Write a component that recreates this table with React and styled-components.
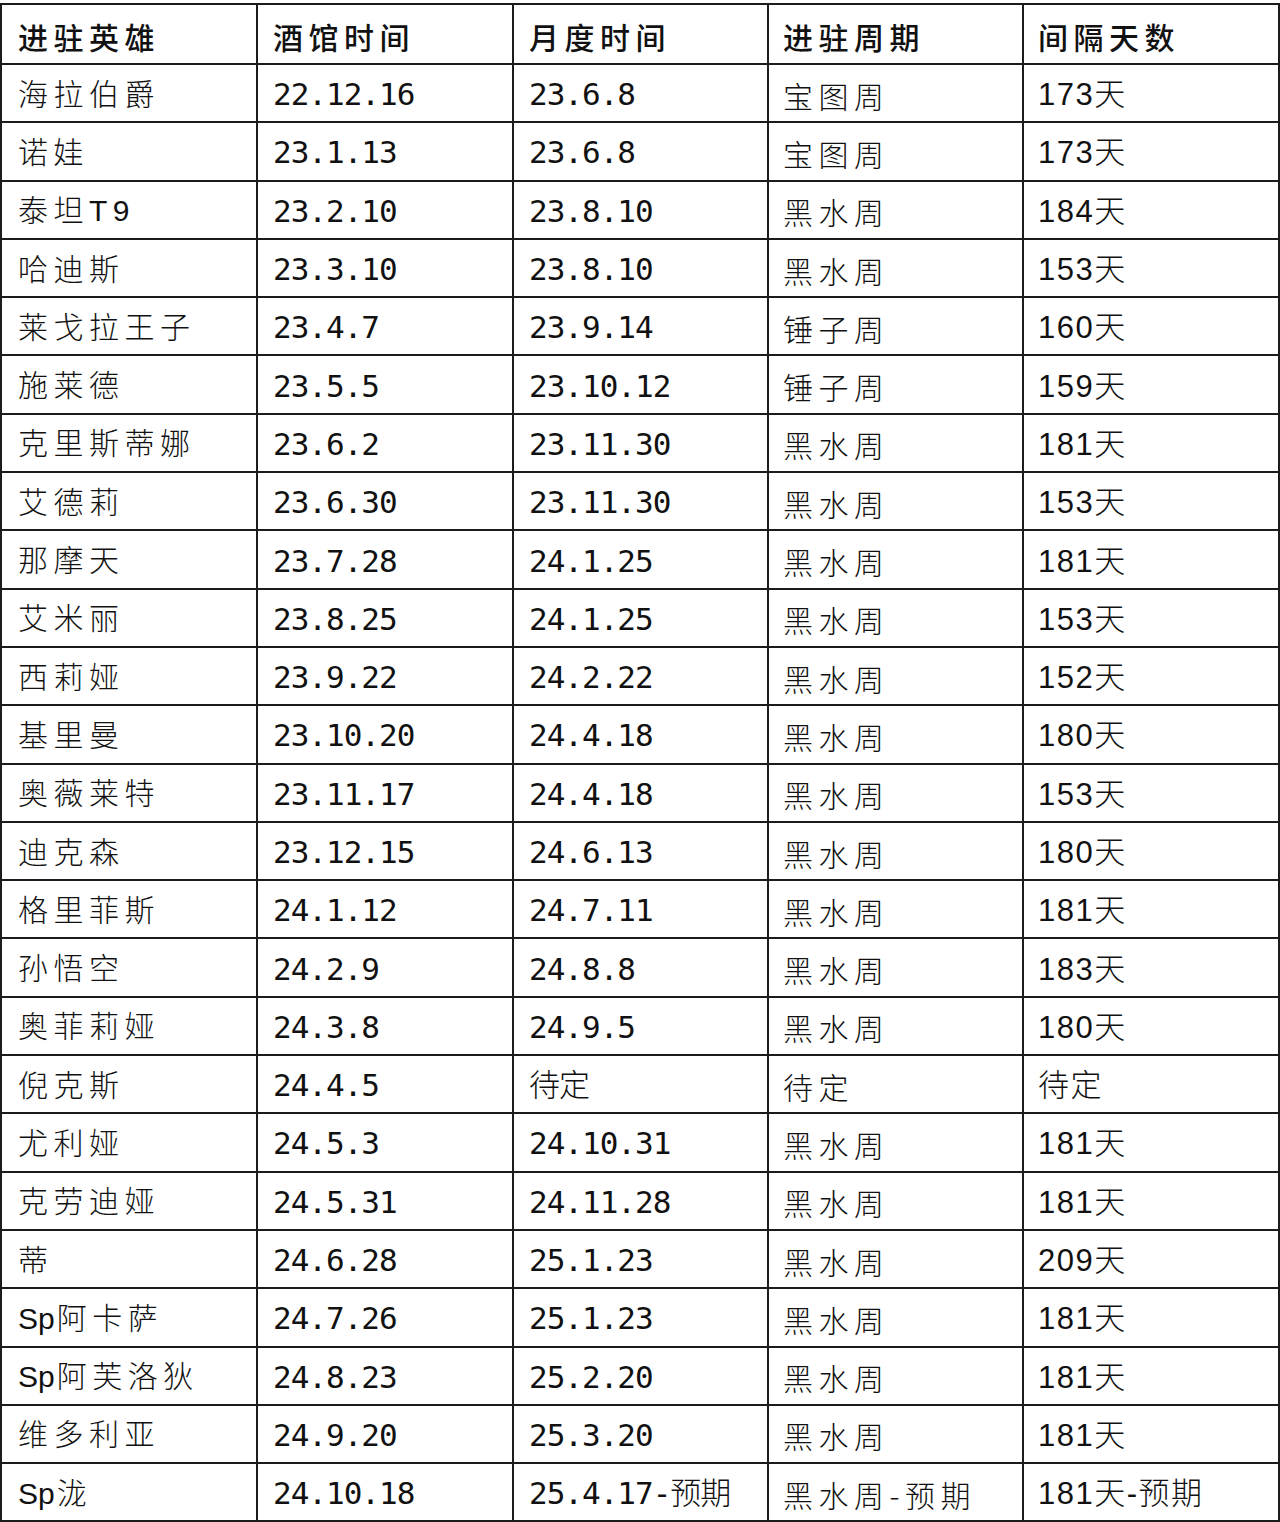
import React from 'react';
import styled, { createGlobalStyle } from 'styled-components';

const GlobalStyle = createGlobalStyle`
  html, body {
    margin: 0;
    padding: 0;
    background: #fff;
  }
  body {
    font-family: "Noto Sans CJK SC", sans-serif;
    color: #111;
  }
`;

const headers = ['进驻英雄', '酒馆时间', '月度时间', '进驻周期', '间隔天数'];

const rows = [
  ['海拉伯爵', '22.12.16', '23.6.8', '宝图周', '173天'],
  ['诺娃', '23.1.13', '23.6.8', '宝图周', '173天'],
  ['泰坦T9', '23.2.10', '23.8.10', '黑水周', '184天'],
  ['哈迪斯', '23.3.10', '23.8.10', '黑水周', '153天'],
  ['莱戈拉王子', '23.4.7', '23.9.14', '锤子周', '160天'],
  ['施莱德', '23.5.5', '23.10.12', '锤子周', '159天'],
  ['克里斯蒂娜', '23.6.2', '23.11.30', '黑水周', '181天'],
  ['艾德莉', '23.6.30', '23.11.30', '黑水周', '153天'],
  ['那摩天', '23.7.28', '24.1.25', '黑水周', '181天'],
  ['艾米丽', '23.8.25', '24.1.25', '黑水周', '153天'],
  ['西莉娅', '23.9.22', '24.2.22', '黑水周', '152天'],
  ['基里曼', '23.10.20', '24.4.18', '黑水周', '180天'],
  ['奥薇莱特', '23.11.17', '24.4.18', '黑水周', '153天'],
  ['迪克森', '23.12.15', '24.6.13', '黑水周', '180天'],
  ['格里菲斯', '24.1.12', '24.7.11', '黑水周', '181天'],
  ['孙悟空', '24.2.9', '24.8.8', '黑水周', '183天'],
  ['奥菲莉娅', '24.3.8', '24.9.5', '黑水周', '180天'],
  ['倪克斯', '24.4.5', '待定', '待定', '待定'],
  ['尤利娅', '24.5.3', '24.10.31', '黑水周', '181天'],
  ['克劳迪娅', '24.5.31', '24.11.28', '黑水周', '181天'],
  ['蒂', '24.6.28', '25.1.23', '黑水周', '209天'],
  ['Sp阿卡萨', '24.7.26', '25.1.23', '黑水周', '181天'],
  ['Sp阿芙洛狄', '24.8.23', '25.2.20', '黑水周', '181天'],
  ['维多利亚', '24.9.20', '25.3.20', '黑水周', '181天'],
  ['Sp泷', '24.10.18', '25.4.17-预期', '黑水周-预期', '181天-预期'],
];

const kinds = ['name', 'date', 'date', 'cjk', 'days'];

const fonts = {
  name: '"Liberation Sans", "Noto Sans CJK SC", sans-serif',
  date: '"DejaVu Sans Mono", "Noto Sans CJK SC", monospace',
  cjk: '"Noto Sans CJK SC", sans-serif',
  days: '"Liberation Sans", "Noto Sans CJK SC", sans-serif',
};

const spacing = {
  name: '5.5px',
  date: '-1px',
  cjk: '5.5px',
  days: '1.5px',
};

const Sheet = styled.table`
  width: 1278px;
  margin-top: 3px;
  border-collapse: collapse;
  table-layout: fixed;
`;

const Col = styled.col`
  width: ${(p) => p.$w}px;
`;

const HeadRow = styled.tr`
  height: 60px;
`;

const Row = styled.tr`
  height: 58.3px;
`;

const Cell = styled.td`
  border: 2px solid #1c1c1c;
  padding: 3px 0 0 ${(p) => p.$pad}px;
  font-family: ${(p) => fonts[p.$kind]};
  letter-spacing: ${(p) => spacing[p.$kind]};
  font-size: ${(p) => (p.$kind === 'date' ? '31px' : p.$kind === 'days' ? '31px' : '30px')};
  font-weight: 300;
  line-height: 1;
  white-space: nowrap;
  vertical-align: middle;
  color: #111;
`;

const Latin = styled.span`
  letter-spacing: 0;
  font-weight: 400;
  margin-right: 2px;
`;

const HeadCell = styled.th`
  border: 2px solid #1c1c1c;
  padding: 3px 0 0 ${(p) => p.$pad}px;
  font-family: "Noto Sans CJK SC", sans-serif;
  font-size: 30px;
  font-weight: 500;
  letter-spacing: 5.5px;
  line-height: 1;
  text-align: left;
  vertical-align: middle;
  color: #111;
`;

const pads = [16, 15, 15, 14, 14];
const widths = [256, 256, 255, 255, 256];

function renderName(v) {
  const m = v.match(/^([A-Za-z0-9]*)(.*)$/);
  if (m && m[1]) {
    return (
      <>
        <Latin>{m[1]}</Latin>
        {m[2]}
      </>
    );
  }
  return v;
}

export default function App() {
  return (
    <>
      <GlobalStyle />
      <Sheet>
        <colgroup>
          {widths.map((w, i) => (
            <Col key={i} $w={w} />
          ))}
        </colgroup>
        <thead>
          <HeadRow>
            {headers.map((h, i) => (
              <HeadCell key={h} $pad={pads[i]}>
                {h}
              </HeadCell>
            ))}
          </HeadRow>
        </thead>
        <tbody>
          {rows.map((r) => (
            <Row key={r[0]}>
              {r.map((v, i) => (
                <Cell key={i} $kind={kinds[i]} $pad={pads[i]}>
                  {i === 0 ? renderName(v) : v}
                </Cell>
              ))}
            </Row>
          ))}
        </tbody>
      </Sheet>
    </>
  );
}
